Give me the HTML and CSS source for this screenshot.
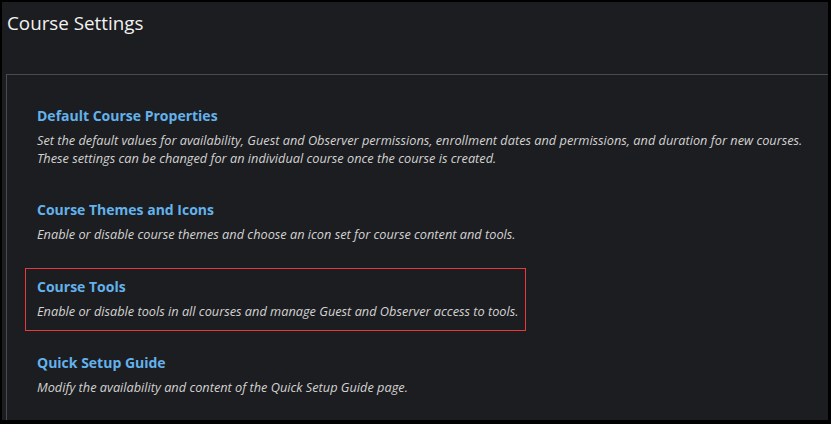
FILE: index.html
```html
<!DOCTYPE html>
<html lang="en">
<head>
<meta charset="utf-8">
<title>Course Settings</title>
<link rel="stylesheet" href="styles.css">
</head>
<body>
<div class="page">
  <h1 class="title">Course Settings</h1>
  <div class="panel">
    <ul class="settings">
      <li class="item">
        <a class="item-title" href="#">Default Course Properties</a>
        <p class="item-desc">Set the default values for availability, Guest and Observer permissions, enrollment dates and permissions, and duration for new courses. These settings can be changed for an individual course once the course is created.</p>
      </li>
      <li class="item item-gap">
        <a class="item-title" href="#">Course Themes and Icons</a>
        <p class="item-desc">Enable or disable course themes and choose an icon set for course content and tools.</p>
      </li>
      <li class="item item-active">
        <a class="item-title" href="#">Course Tools</a>
        <p class="item-desc">Enable or disable tools in all courses and manage Guest and Observer access to tools.</p>
      </li>
      <li class="item">
        <a class="item-title" href="#">Quick Setup Guide</a>
        <p class="item-desc">Modify the availability and content of the Quick Setup Guide page.</p>
      </li>
    </ul>
  </div>
</div>
</body>
</html>
```

FILE: styles.css
```css
html, body {
  margin: 0;
  padding: 0;
  height: 100%;
}
body {
  background: #000;
  padding: 2px 3px 4px 2px;
  box-sizing: border-box;
  font-family: "Open Sans", "Liberation Sans", sans-serif;
}
.page {
  height: 100%;
  background: #1c1d20;
  overflow: hidden;
  padding-left: 4px;
  box-sizing: border-box;
}
.title {
  margin: 0;
  padding: 8px 0 0 1px;
  height: 72px;
  box-sizing: border-box;
  font-size: 18.8px;
  font-weight: 400;
  line-height: 26px;
  color: #f2f2f2;
}
.panel {
  border-top: 1px solid #4a4b4e;
  border-left: 1px solid #4a4b4e;
  margin-right: -10px;
  padding: 22px 0 0 18px;
  height: 400px;
}
.settings {
  list-style: none;
  margin: 0;
  padding: 0;
  display: flex;
  flex-direction: column;
  gap: 13px;
}
.item {
  border: 1px solid transparent;
  padding: 8px 11px 10px;
  width: fit-content;
}
.item-gap {
  margin-bottom: 1px;
}
.settings .item-active {
  border: 1px solid #e8393f;
  padding-right: 7px;
}
.item-title {
  display: block;
  font-size: 14px;
  font-weight: 700;
  line-height: 20px;
  color: #63b2ec;
  text-decoration: none;
  margin-bottom: 5px;
}
.item-desc {
  margin: 0;
  font-size: 12.75px;
  font-style: italic;
  line-height: 18px;
  color: #d2d2d2;
  max-width: 772px;
}
```
